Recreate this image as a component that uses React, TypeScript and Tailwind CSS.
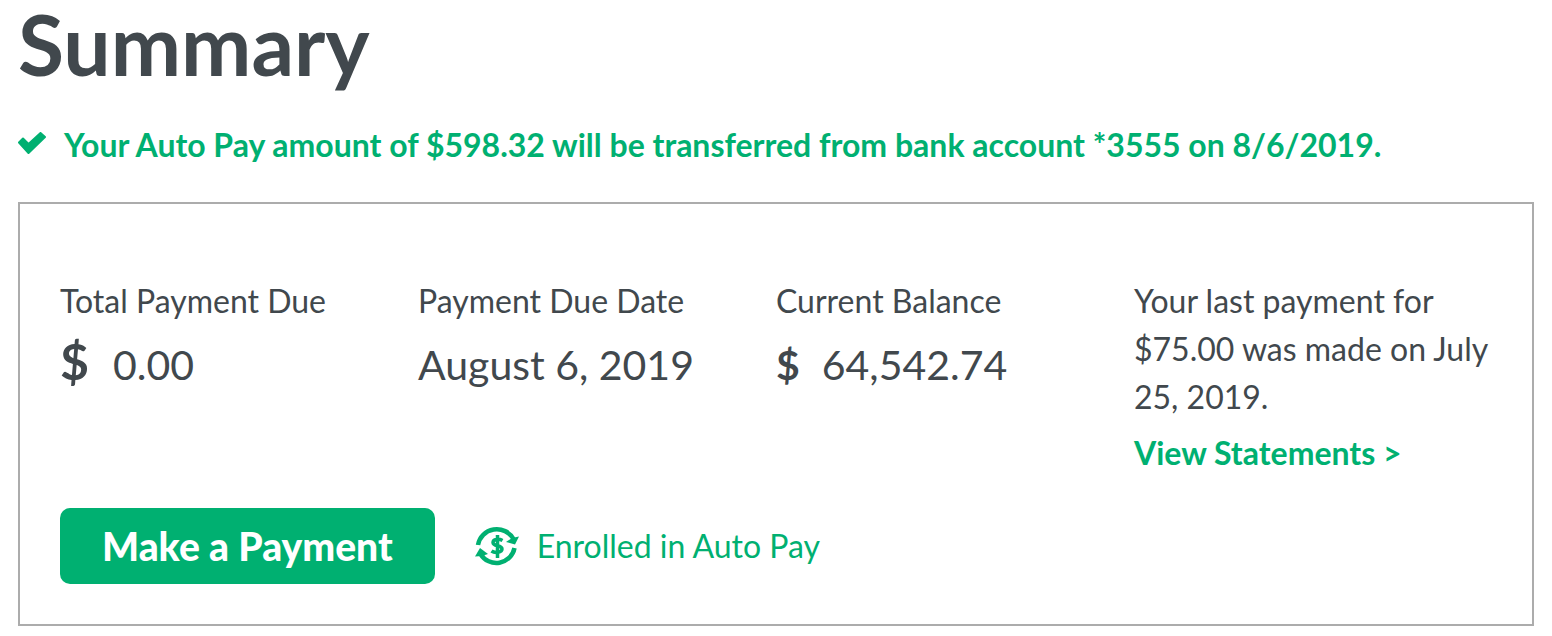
import React from "react";

function CheckIcon() {
  return (
    <svg aria-hidden="true" viewBox="0 0 28 22" className="mb-1 h-[22px] w-7 shrink-0" fill="currentColor" stroke="currentColor" strokeWidth="2" strokeLinejoin="round">
      <path d="M1 10.500 L5 6.500 L10.500 12 L22.500 1 L27 5 L10.500 21 Z" />
    </svg>
  );
}

function AutoPayIcon() {
  return (
    <svg aria-hidden="true" viewBox="0 0 44 42" className="h-[42px] w-11 shrink-0" fill="none" stroke="currentColor" strokeWidth="4.5">
      <path d="M3 20 A19 18.500 0 0 1 38.500 14" />
      <path d="M39.500 23 A18.500 18.500 0 0 1 5.500 29" />
      <path d="M44 11.500 L40 19.500 L31 17 L37 13 Z" fill="currentColor" stroke="none" />
      <path d="M0 31.500 L5 23 L13 29 L7 31 Z" fill="currentColor" stroke="none" />
      <path d="M27.500 15.500 C24 13.500 18 14 18 17.500 C18 22 27 19.500 27 24 C27 27.500 20 28.500 16.500 26 M22.500 10 V33" strokeWidth="3.5" />
    </svg>
  );
}

export default function App() {
  return (
    <main className="px-[18px] pb-2 font-['Lato',sans-serif] text-[#41484d]">
      <h1 className="pt-0.5 text-[84px] leading-[84px] font-bold">Summary</h1>
      <p className="mt-9 flex items-center gap-[18px] text-[32px] leading-[46px] font-bold text-[#00b071]">
        <CheckIcon />
        Your Auto Pay amount of $598.32 will be transferred from bank account *3555 on 8/6/2019.
      </p>
      <section className="mt-[34px] border-2 border-[#acacac] px-10 pt-[73px] pb-10">
        <div className="grid grid-cols-4 text-[32px] leading-[48px]">
          <div>
            <h2>Total Payment Due</h2>
            <p className="mt-3 flex items-baseline gap-6 text-[41px]"><span className="text-[50px] font-bold">$</span>0.00</p>
          </div>
          <div>
            <h2>Payment Due Date</h2>
            <p className="mt-4 text-[41px]">August 6, 2019</p>
          </div>
          <div>
            <h2>Current Balance</h2>
            <p className="mt-4 flex items-baseline gap-[22px] text-[41px]"><span className="font-bold">$</span>64,542.74</p>
          </div>
          <div>
            <p>Your last payment for $75.00 was made on July 25, 2019.</p>
            <a href="#statements" className="mt-2 block font-bold text-[#00b071]">View Statements &gt;</a>
          </div>
        </div>
        <div className="mt-[31px] flex items-center gap-10 text-[#00b071]">
          <button type="button" className="h-[76px] rounded-[10px] bg-[#00b071] px-[42px] text-[39px] font-black text-white">Make a Payment</button>
          <p className="flex items-center gap-[18px] text-[32px] leading-[48px]"><AutoPayIcon />Enrolled in Auto Pay</p>
        </div>
      </section>
    </main>
  );
}
